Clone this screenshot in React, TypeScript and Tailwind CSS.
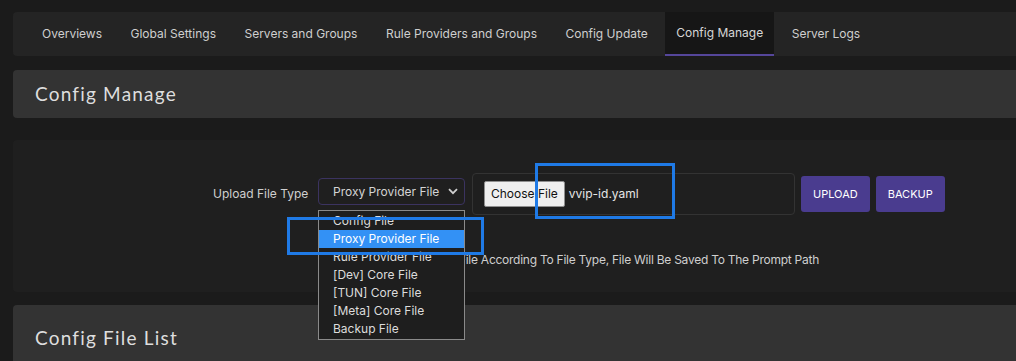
import React from 'react';

const tabs = [
    'Overviews',
    'Global Settings',
    'Servers and Groups',
    'Rule Providers and Groups',
    'Config Update',
    'Config Manage',
    'Server Logs',
];

const fileTypes = [
    'Config File',
    'Proxy Provider File',
    'Rule Provider File',
    '[Dev] Core File',
    '[TUN] Core File',
    '[Meta] Core File',
    'Backup File',
];

const App: React.FC = () => {
    const active = 'Config Manage';
    const selected = 'Proxy Provider File';

    return (
        <div className="min-h-[361px] bg-[#1b1b1b] pt-3 pl-[13px] font-['Inter',sans-serif] text-[12px] text-[#cfcfcf] overflow-hidden">
            {/* tabs */}
            <nav className="flex gap-[6.5px] h-[44px] bg-[#242424] rounded-l-[4px] pl-[18px]">
                {tabs.map((tab) => (
                    <div
                        key={tab}
                        className={
                            tab === active
                                ? 'flex items-center px-[11px] bg-[#161616] border-b-2 border-[#55469a] text-[#d6d6d6] whitespace-nowrap'
                                : 'flex items-center px-[11px] whitespace-nowrap'
                        }
                    >
                        {tab}
                    </div>
                ))}
            </nav>

            {/* header */}
            <div className="mt-[14px] h-[48px] bg-[#333333] rounded-l-[4px] flex items-center pl-[22px]">
                <h2 className="font-['Lato',sans-serif] text-[19px] tracking-[1.2px] text-[#dedede]">Config Manage</h2>
            </div>

            {/* upload form */}
            <div className="relative mt-[22px] h-[152px] bg-[#1f1f1f] rounded-l-[4px]">
                <div className="flex items-center pt-[33px] pl-[200px]">
                    <label className="w-[105px] text-[#cfcfcf] whitespace-nowrap">Upload File Type</label>
                    <div className="relative mb-[5px]">
                        <div className="w-[147px] h-[27px] border border-[#3b3360] rounded-[4px] flex items-center justify-between pl-[14px] pr-[6px] text-[#d4d4d4] whitespace-nowrap">
                            <span>{selected}</span>
                            <svg width="10" height="7" viewBox="0 0 10 7" fill="none">
                                <path d="M1 1.2 5 5.2 9 1.2" stroke="#cfcfcf" strokeWidth="1.8" />
                            </svg>
                        </div>
                        {/* opened list */}
                        <ul className="absolute left-0 top-[32px] z-10 w-[147px] bg-[#1e1e1e] border border-[#8a8a8a] py-[1px] text-[#dcdcdc] whitespace-nowrap">
                            {fileTypes.map((t) => (
                                <li
                                    key={t}
                                    className={
                                        t === selected
                                            ? 'h-[18px] leading-[18px] pl-[14px] bg-[#3391f5] text-white'
                                            : 'h-[18px] leading-[18px] pl-[14px]'
                                    }
                                >
                                    {t}
                                </li>
                            ))}
                        </ul>
                    </div>
                    <div className="ml-[7px] w-[323px] h-[42px] border border-[#333] rounded-[4px] flex items-center pl-[11px]">
                        <span className="h-[26px] px-[6px] flex items-center bg-[#efefef] border border-[#8f8f8f] rounded-[2px] text-[#111] whitespace-nowrap">
                            Choose File
                        </span>
                        <span className="ml-[4px] text-[#e6e6e6]">vvip-id.yaml</span>
                    </div>
                    <button className="ml-[6px] h-[36px] px-[12px] bg-[#4a3c8f] rounded-[3px] text-white text-[11px]">UPLOAD</button>
                    <button className="ml-[6px] h-[36px] px-[12px] bg-[#4a3c8f] rounded-[3px] text-white text-[11px]">BACKUP</button>
                </div>
                <div className="mt-[36px] pl-[318px]">
                    <p className="w-[488px] text-right whitespace-nowrap tracking-[-0.25px] text-[#cfcfcf]">
                        Please Upload The File According To File Type, File Will Be Saved To The Prompt Path
                    </p>
                </div>

                {/* annotation boxes */}
                <div className="absolute left-[522px] top-[23px] w-[140px] h-[56px] border-[3px] border-[#1f7ae6] z-20" />
                <div className="absolute left-[274px] top-[77px] w-[197px] h-[38px] border-[3px] border-[#1f7ae6] z-20" />
            </div>

            {/* file list header */}
            <div className="mt-[13px] h-[60px] bg-[#333333] rounded-l-[4px] pl-[22px] pt-[19px]">
                <h2 className="font-['Lato',sans-serif] text-[19px] tracking-[1.2px] text-[#dedede]">Config File List</h2>
            </div>
        </div>
    );
};

export default App;
